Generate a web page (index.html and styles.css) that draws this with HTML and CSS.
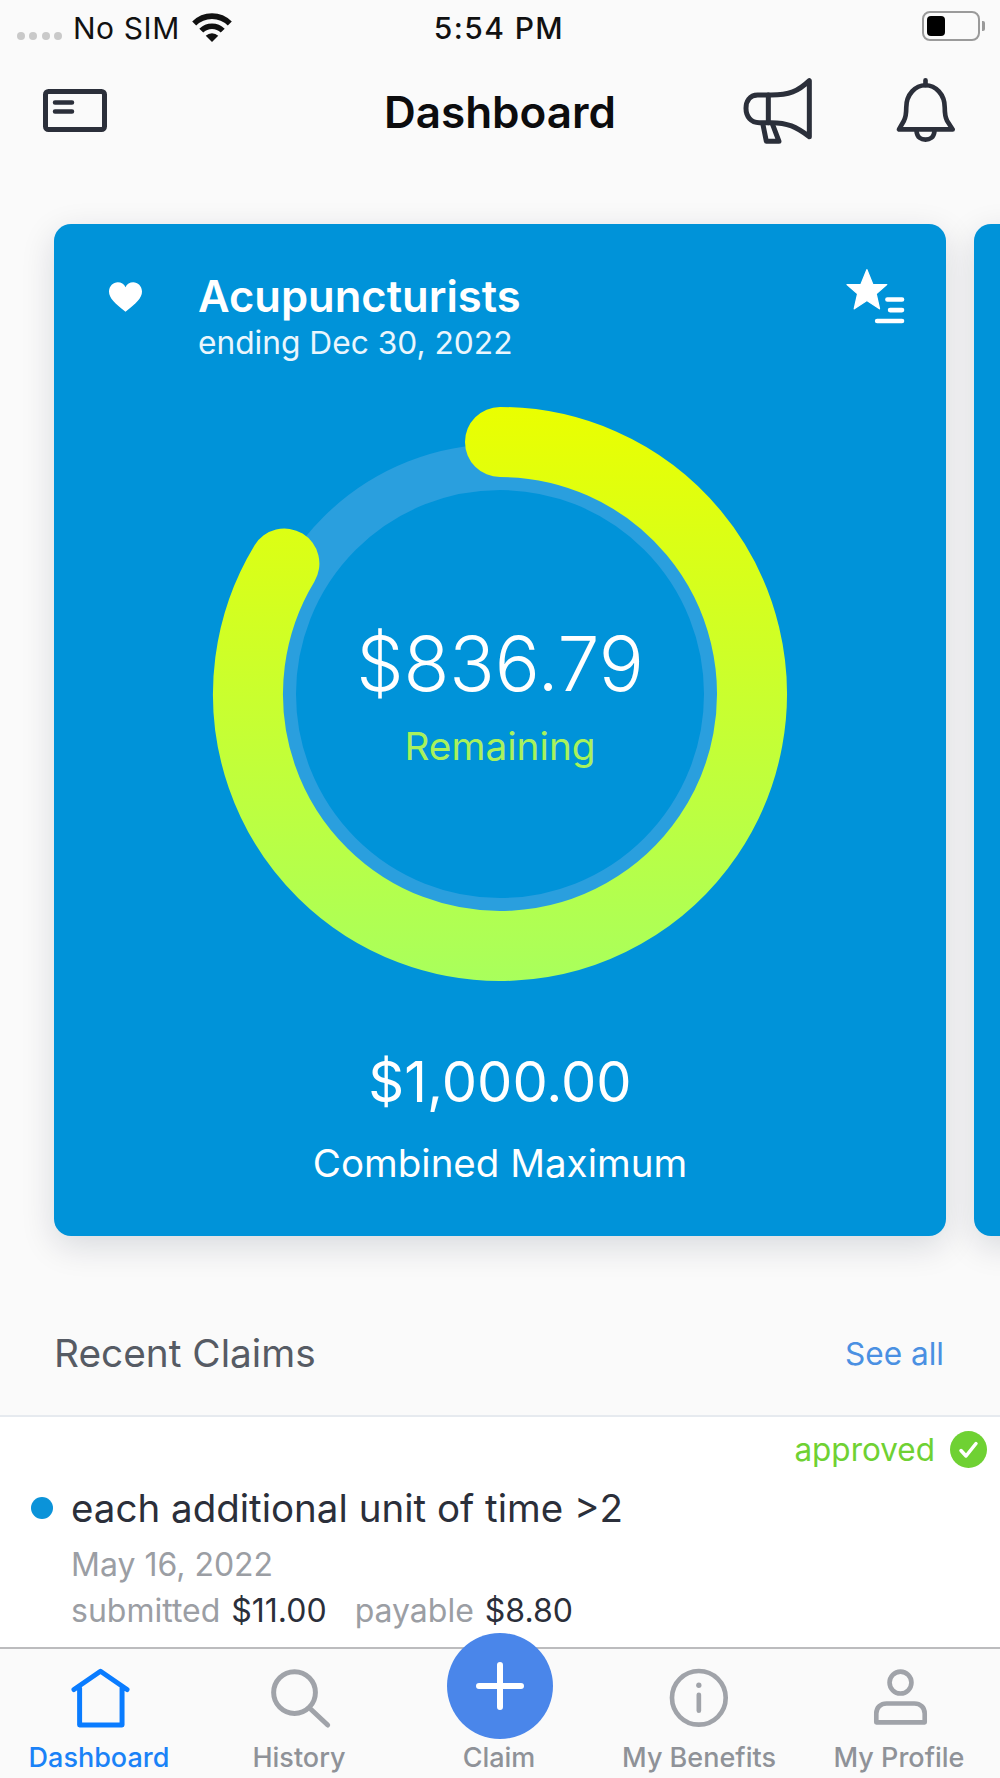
FILE: index.html
```html
<!DOCTYPE html>
<html lang="en">
<head>
<meta charset="utf-8">
<title>Dashboard</title>
<link rel="stylesheet" href="styles.css">
</head>
<body>
<div class="phone">
  <div class="status">
    <div class="status-left">
      <span class="signal"><i></i><i></i><i></i><i></i></span>
      <span class="carrier">No SIM</span>
      <svg class="wifi" viewBox="575 33 126 94"><path d="M584 68A76 76 0 0 1 692 68M605.500 89.500A46 46 0 0 1 670.500 89.500" fill="none" stroke="#111" stroke-width="17"/><path d="M638 124L619 105A27 27 0 0 1 657 105Z" fill="#111"/></svg>
    </div>
    <div class="time">5:54 PM</div>
    <div class="status-right">
      <span class="battery"><span class="battery-fill"></span></span>
      <span class="battery-nub"></span>
    </div>
  </div>

  <header class="nav">
    <div class="nav-left">
      <svg class="icon-card" viewBox="0 0 64 43"><rect x="2.500" y="2.500" width="59" height="38" rx="3" fill="none" stroke="#2b2f3a" stroke-width="5"/><path d="M12 13.500H29M12 22.500H29" stroke="#2b2f3a" stroke-width="4.500" stroke-linecap="round"/></svg>
    </div>
    <h1 class="title">Dashboard</h1>
    <div class="nav-right">
      <svg class="icon-mega" viewBox="720 225 225 210" fill="none" stroke="#2b2f3a" stroke-width="15" stroke-linejoin="round" stroke-linecap="round"><path d="M925 242V410C885 380 860 368 810 368H775C750 368 735 350 735 325C735 305 745 285 770 285H810C865 285 890 275 925 242Z"/><path d="M802 285V368M786 374L796 424H834L815 374"/></svg>
      <svg class="icon-bell" viewBox="1180 230 190 205" fill="none" stroke="#2b2f3a" stroke-width="14" stroke-linejoin="round" stroke-linecap="round"><path d="M1195 391H1357L1340 365C1335 355 1333 345 1333 325C1333 285 1305 258 1275 258C1245 258 1217 285 1217 325C1217 345 1215 355 1210 365Z"/><path d="M1275 243V258M1248 397C1250 415 1262 422 1275 422C1288 422 1300 415 1302 397"/></svg>
    </div>
  </header>

  <main class="main">
    <section class="carousel">
      <article class="card">
        <div class="card-head">
          <svg class="icon-heart" viewBox="207 217 98 88"><path d="M256 305C225 280 207 265 207 245C207 228 220 217 233 217C243 217 252 222 256 232C260 222 269 217 279 217C292 217 305 228 305 245C305 265 287 280 256 305Z" fill="#fff"/></svg>
          <div class="card-titles">
            <h2 class="card-title">Acupuncturists</h2>
            <p class="card-sub">ending Dec 30, 2022</p>
          </div>
          <svg class="icon-fav" viewBox="195 170 182 172"><polygon points="260,175 278,220 320,220 288,248 298,293 260,268 222,293 232,248 200,220 242,220" fill="#fff" stroke="#fff" stroke-width="4" stroke-linejoin="round"/><path d="M322 265H366M330 297H366M291 330H366" stroke="#fff" stroke-width="14" stroke-linecap="round"/></svg>
        </div>
        <div class="ring">
          <svg class="ring-svg" viewBox="-290 -290 580 580">
            <defs>
              <linearGradient id="ringGrad" gradientUnits="userSpaceOnUse" x1="0" y1="-287" x2="0" y2="287">
                <stop offset="0" stop-color="#eaff00"/>
                <stop offset="1" stop-color="#a9ff5c"/>
              </linearGradient>
            </defs>
            <circle r="227" fill="none" stroke="#2a9fde" stroke-width="46"/>
            <path d="M0 -252A252 252 0 1 1 -215.600 -130.500" fill="none" stroke="url(#ringGrad)" stroke-width="70" stroke-linecap="round"/>
          </svg>
          <div class="ring-text">
            <div class="ring-amount">$836.79</div>
            <div class="ring-label">Remaining</div>
          </div>
        </div>
        <div class="max-amount">$1,000.00</div>
        <div class="max-label">Combined Maximum</div>
      </article>
      <article class="card card-next"></article>
    </section>

    <div class="section-head">
      <h2 class="section-title">Recent Claims</h2>
      <a class="see-all">See all</a>
    </div>

    <section class="claim">
      <div class="claim-status">
        <span class="approved">approved</span>
        <svg class="icon-check" viewBox="0 0 37 37"><circle cx="18.500" cy="18.500" r="18.500" fill="#6fd133"/><path d="M11 19.500L16 25L26 12.500" fill="none" stroke="#fff" stroke-width="3.500" stroke-linecap="round" stroke-linejoin="round"/></svg>
      </div>
      <div class="claim-title-row">
        <span class="claim-dot"></span>
        <span class="claim-title">each additional unit of time &gt;2</span>
      </div>
      <div class="claim-date">May 16, 2022</div>
      <div class="claim-amounts">
        <span class="muted">submitted</span> <span class="value">$11.00</span>
        <span class="muted second">payable</span> <span class="value">$8.80</span>
      </div>
    </section>
  </main>

  <nav class="tabbar">
    <div class="tab tab-active">
      <svg class="tab-icon" viewBox="205 140 190 190" fill="none" stroke="#0a7cff" stroke-width="15" stroke-linejoin="round" stroke-linecap="round"><path d="M220 208L300 153L380 208M237 203V315H365V203"/></svg>
      <span class="tab-label">Dashboard</span>
    </div>
    <div class="tab">
      <svg class="tab-icon" viewBox="805 140 190 190" fill="none" stroke="#a0a3a9" stroke-width="15" stroke-linecap="round"><circle cx="882" cy="217" r="63"/><path d="M932 268L982 315"/></svg>
      <span class="tab-label">History</span>
    </div>
    <div class="tab">
      <span class="tab-icon"></span>
      <span class="tab-label">Claim</span>
    </div>
    <div class="tab">
      <svg class="tab-icon" viewBox="505 140 190 190" fill="none" stroke="#a0a3a9" stroke-width="14" stroke-linecap="round"><circle cx="595" cy="233" r="81"/><path d="M595 224V272"/><circle cx="595" cy="195" r="8" fill="#a0a3a9" stroke="none"/></svg>
      <span class="tab-label">My Benefits</span>
    </div>
    <div class="tab">
      <svg class="tab-icon" viewBox="1105 140 190 190" fill="none" stroke="#a0a3a9" stroke-width="14" stroke-linejoin="round"><circle cx="1200" cy="187" r="33"/><path d="M1127 307V280C1127 262 1140 250 1158 250H1242C1260 250 1273 262 1273 280V307Z"/></svg>
      <span class="tab-label">My Profile</span>
    </div>
    <button class="fab" type="button" aria-label="Add claim">
      <svg class="fab-plus" viewBox="0 0 48 48"><path d="M24 3V45M3 24H45" stroke="#fff" stroke-width="6" stroke-linecap="round"/></svg>
    </button>
  </nav>
</div>
</body>
</html>
```

FILE: styles.css
```css
* { box-sizing: border-box; }
html, body { margin: 0; padding: 0; }
body { font-family: Inter, "Liberation Sans", sans-serif; background: #fafafa; color: #2b2f3a; }
h1, h2, p { margin: 0; }

.phone { width: 1000px; height: 1778px; display: flex; flex-direction: column; overflow: hidden; background: #fafafa; }

.status { height: 56px; flex: none; display: grid; grid-template-columns: 1fr auto 1fr; align-items: start; color: #111; }
.status-left { display: flex; align-items: flex-start; padding: 10px 0 0 17px; }
.signal { display: flex; gap: 4.300px; margin-top: 22px; }
.signal i { display: block; width: 8px; height: 8px; border-radius: 50%; background: #c9c9c9; }
.carrier { font-size: 30px; line-height: 36px; letter-spacing: 0.6px; margin-left: 11px; }
.wifi { width: 42px; height: 31px; margin: 2px 0 0 11px; }
.time { font-size: 30px; line-height: 36px; letter-spacing: 1.400px; font-weight: 500; padding-top: 10px; margin-left: -2px; }
.status-right { display: flex; justify-content: flex-end; align-items: center; padding: 11px 15px 0 0; gap: 2px; }
.battery { width: 58px; height: 30px; border: 2px solid #9a9a9a; border-radius: 8px; padding: 3px; display: block; }
.battery-fill { display: block; width: 18px; height: 20px; background: #000; border-radius: 4px; }
.battery-nub { width: 3px; height: 10px; background: #9a9a9a; border-radius: 0 2px 2px 0; }

.nav { height: 112px; flex: none; display: grid; grid-template-columns: 1fr auto 1fr; align-items: center; }
.nav-left { padding-left: 43px; display: flex; }
.icon-card { width: 64px; height: 43px; margin-top: -4px; }
.title { font-size: 44px; line-height: 50px; font-weight: 600; color: #0c0c0e; }
.nav-right { display: flex; justify-content: flex-end; align-items: center; gap: 78px; padding-right: 43px; margin-top: -4px; }
.icon-mega { width: 75px; height: 70px; }
.icon-bell { width: 63px; height: 68px; }

.main { flex: 1; min-height: 0; overflow: hidden; }

.carousel { display: flex; gap: 28px; padding: 56px 0 64px 54px; overflow: hidden; }
.card { flex: none; width: 892px; height: 1012px; background: #0093d9; border-radius: 17px; box-shadow: 0 10px 34px rgba(10, 20, 50, 0.14); color: #fff; display: flex; flex-direction: column; align-items: center; padding-top: 47px; }
.card-next { padding: 0; }

.card-head { align-self: stretch; display: flex; align-items: flex-start; position: relative; padding-left: 55px; }
.icon-heart { width: 33px; height: 30px; margin-top: 11px; flex: none; }
.card-titles { margin-left: 56px; flex: 1; }
.card-title { font-size: 43.500px; line-height: 50px; font-weight: 600; }
.card-sub { font-size: 31.700px; line-height: 38px; margin-top: 3px; color: #eaf6fd; }
.icon-fav { width: 61px; height: 57px; margin: -3px 40px 0 0; flex: none; }

.ring { display: grid; width: 580px; height: 580px; margin-top: 42px; flex: none; }
.ring-svg, .ring-text { grid-area: 1 / 1; }
.ring-svg { width: 580px; height: 580px; }
.ring-text { display: flex; flex-direction: column; align-items: center; padding-top: 218px; }
.ring-amount { font-size: 75px; line-height: 84px; font-weight: 300; }
.ring-label { font-size: 38.800px; line-height: 46px; margin-top: 17px; color: #a8f25c; }

.max-amount { font-size: 56px; line-height: 70px; margin-top: 63px; font-weight: 400; }
.max-label { font-size: 38.500px; line-height: 46px; margin-top: 23px; }

.section-head { display: flex; justify-content: space-between; align-items: center; padding: 30px 56px 39px 54px; border-bottom: 2px solid #e6eaef; }
.section-title { font-size: 38.800px; line-height: 46px; font-weight: 400; color: #565b64; }
.see-all { font-size: 31.600px; line-height: 36px; margin-top: 1px; color: #4a90e2; }

.claim { background: #fff; padding: 14px 13px 0 31px; height: 240px; }
.claim-status { display: flex; justify-content: flex-end; align-items: center; gap: 15px; height: 37px; }
.approved { font-size: 31.500px; line-height: 36px; color: #6fd133; }
.icon-check { width: 37px; height: 37px; }
.claim-title-row { display: flex; align-items: center; gap: 18px; margin-top: 17px; height: 46px; }
.claim-dot { width: 22px; height: 22px; border-radius: 50%; background: #0b93d9; flex: none; }
.claim-title { font-size: 38.500px; line-height: 46px; }
.claim-date { font-size: 32px; line-height: 36px; margin: 16px 0 0 40px; color: #9b9ea4; }
.claim-amounts { font-size: 32px; line-height: 36px; margin: 10px 0 0 40px; }
.muted { color: #9b9ea4; }
.value { margin-left: 2px; color: #2b2f3a; }
.second { margin-left: 19px; }

.tabbar { height: 131px; flex: none; display: grid; grid-template-columns: repeat(5, 1fr); background: #fafafa; border-top: 2px solid #bcbcbe; position: relative; }
.tab { display: flex; flex-direction: column; align-items: center; padding-top: 18px; color: #8f9298; }
.tab-active { color: #1a82f7; }
.tab-icon { display: block; width: 63px; height: 63px; flex: none; }
.tab-label { font-size: 27px; line-height: 34px; font-weight: 500; margin-top: 11px; margin-left: -2px; white-space: nowrap; }
.fab { position: absolute; left: 447px; top: -16px; width: 106px; height: 106px; border-radius: 50%; border: 0; padding: 0; background: #4a86ea; display: flex; align-items: center; justify-content: center; }
.fab-plus { width: 48px; height: 48px; }
```
